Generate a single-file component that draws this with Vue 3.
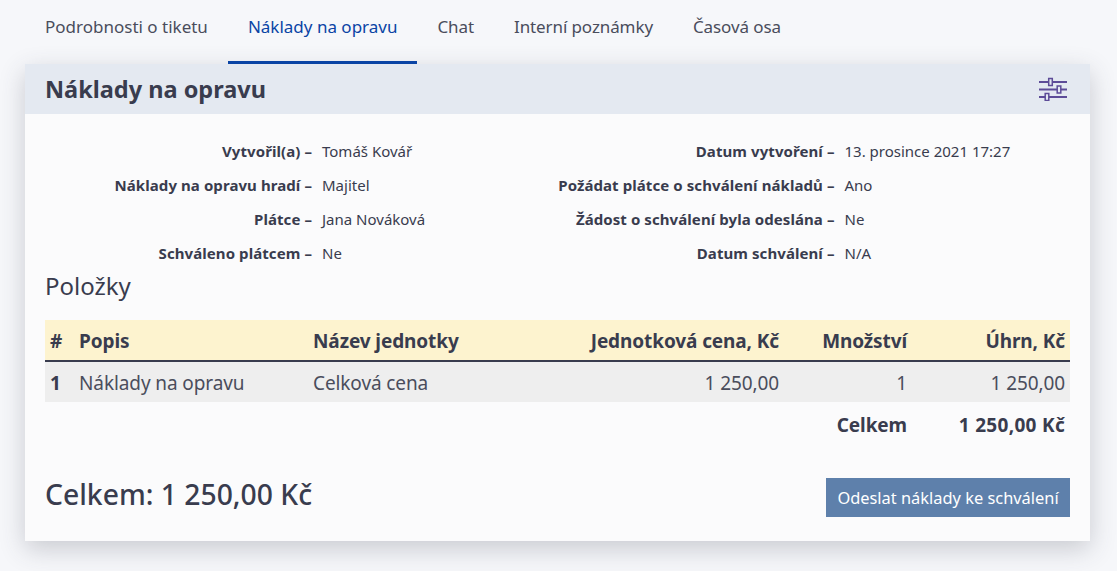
<template>
  <div class="page">
    <nav class="tabs">
      <a v-for="tab in tabs" :key="tab" class="tab" :class="{ active: tab === activeTab }">{{ tab }}</a>
    </nav>
    <section class="card">
      <header class="card-head">
        <h2>Náklady na opravu</h2>
        <svg class="filter-icon" width="28" height="24" viewBox="0 0 28 24" fill="none">
          <path d="M0 5H9.500M13.500 5H28M0 12.500H18M22 12.500H28M0 20H6M10 20H28" stroke="#5d4c98" stroke-width="1.800" />
          <rect x="9.700" y="1.500" width="3.600" height="7" stroke="#5d4c98" stroke-width="1.500" />
          <rect x="18.200" y="9" width="3.600" height="7" stroke="#5d4c98" stroke-width="1.500" />
          <rect x="6.200" y="16.500" width="3.600" height="7" stroke="#5d4c98" stroke-width="1.500" />
        </svg>
      </header>
      <div class="card-body">
        <div class="meta">
          <div v-for="row in meta" :key="row.label" class="meta-row" :class="row.side">
            <strong>{{ row.label }} –</strong>
            <span>{{ row.value }}</span>
          </div>
        </div>
        <h3>Položky</h3>
        <div class="items">
          <div class="tr thead">
            <div>#</div>
            <div>Popis</div>
            <div>Název jednotky</div>
            <div class="num">Jednotková cena, Kč</div>
            <div class="num">Množství</div>
            <div class="num">Úhrn, Kč</div>
          </div>
          <div class="tr tbody">
            <div class="idx">1</div>
            <div>Náklady na opravu</div>
            <div>Celková cena</div>
            <div class="num">1 250,00</div>
            <div class="num">1</div>
            <div class="num">1 250,00</div>
          </div>
          <div class="tr tfoot">
            <div class="num">Celkem</div>
            <div class="num sum">1 250,00 Kč</div>
          </div>
        </div>
        <div class="bottom">
          <div class="grand">Celkem: 1 250,00 Kč</div>
          <button class="btn" type="button">Odeslat náklady ke schválení</button>
        </div>
      </div>
    </section>
  </div>
</template>

<script setup>
const activeTab = 'Náklady na opravu';
const tabs = ['Podrobnosti o tiketu', 'Náklady na opravu', 'Chat', 'Interní poznámky', 'Časová osa'];

const meta = [
  { label: 'Vytvořil(a)', value: 'Tomáš Kovář', side: 'left' },
  { label: 'Datum vytvoření', value: '13. prosince 2021 17:27', side: 'right' },
  { label: 'Náklady na opravu hradí', value: 'Majitel', side: 'left' },
  { label: 'Požádat plátce o schválení nákladů', value: 'Ano', side: 'right' },
  { label: 'Plátce', value: 'Jana Nováková', side: 'left' },
  { label: 'Žádost o schválení byla odeslána', value: 'Ne', side: 'right' },
  { label: 'Schváleno plátcem', value: 'Ne', side: 'left' },
  { label: 'Datum schválení', value: 'N/A', side: 'right' }
];
</script>

<style>
body {
  background: #f6f7fa;
}
</style>

<style scoped>
.page {
  width: 1117px;
  height: 571px;
  padding: 0 27px 0 25px;
  box-sizing: border-box;
  overflow: hidden;
  font-family: "Noto Sans", "Open Sans", sans-serif;
  color: #393c4e;
}

.tabs {
  display: flex;
  height: 64px;
}

.tab {
  padding: 0 20px;
  line-height: 53px;
  font-size: 17px;
  color: #4a4d5c;
}

.tab:nth-child(n + 3) {
  letter-spacing: -0.1px;
}

.tab.active {
  color: #0a44a5;
  border-bottom: 3px solid #0a44a5;
}

.card {
  background: #fbfbfc;
  box-shadow: 0 8px 24px rgba(60, 64, 80, 0.24);
}

.card-head {
  display: flex;
  align-items: center;
  justify-content: space-between;
  height: 50px;
  padding: 0 23px 0 20px;
  background: #e4e9f1;
}

.card-head h2 {
  margin: 0;
  font-size: 23.500px;
  font-weight: 700;
}

.card-body {
  padding: 20px 20px 24px;
}

.meta {
  display: grid;
  grid-template-columns: 1fr 1fr;
  font-size: 15px;
}

.meta-row {
  display: grid;
  align-items: center;
  height: 34px;
  column-gap: 10px;
}

.meta-row.left {
  grid-template-columns: 267px 1fr;
}

.meta-row.right {
  grid-template-columns: 277px 1fr;
}

.meta-row strong {
  text-align: right;
  font-weight: 700;
  letter-spacing: 0.08px;
}

h3 {
  margin: 0;
  height: 50px;
  font-size: 24px;
  font-weight: 400;
  line-height: 32px;
}

.tr {
  display: grid;
  grid-template-columns: 29px 234px 1fr 200px 128px 158px;
  align-items: center;
  padding: 0 5px;
  font-size: 19px;
  letter-spacing: -0.1px;
}

.thead {
  height: 38px;
  padding-top: 2px;
  background: #fdf3cf;
  border-bottom: 2px solid #393c4e;
  font-weight: 700;
}

.tbody {
  height: 38px;
  padding-top: 2px;
  background: #eeeeee;
  color: #4a4d5c;
}

.idx {
  font-weight: 700;
  color: #393c4e;
}

.num {
  text-align: right;
}

.tfoot {
  height: 46px;
  grid-template-columns: 1fr 158px;
  font-weight: 700;
}

.sum {
  letter-spacing: 0.3px;
}

.bottom {
  display: flex;
  align-items: flex-start;
  justify-content: space-between;
  margin-top: 30px;
}

.grand {
  font-size: 28.300px;
  font-weight: 500;
  line-height: 32px;
}

.btn {
  height: 39px;
  width: 244px;
  padding: 0;
  border: 0;
  background: #5e80ab;
  color: #fff;
  font-family: inherit;
  font-size: 16.400px;
}
</style>
